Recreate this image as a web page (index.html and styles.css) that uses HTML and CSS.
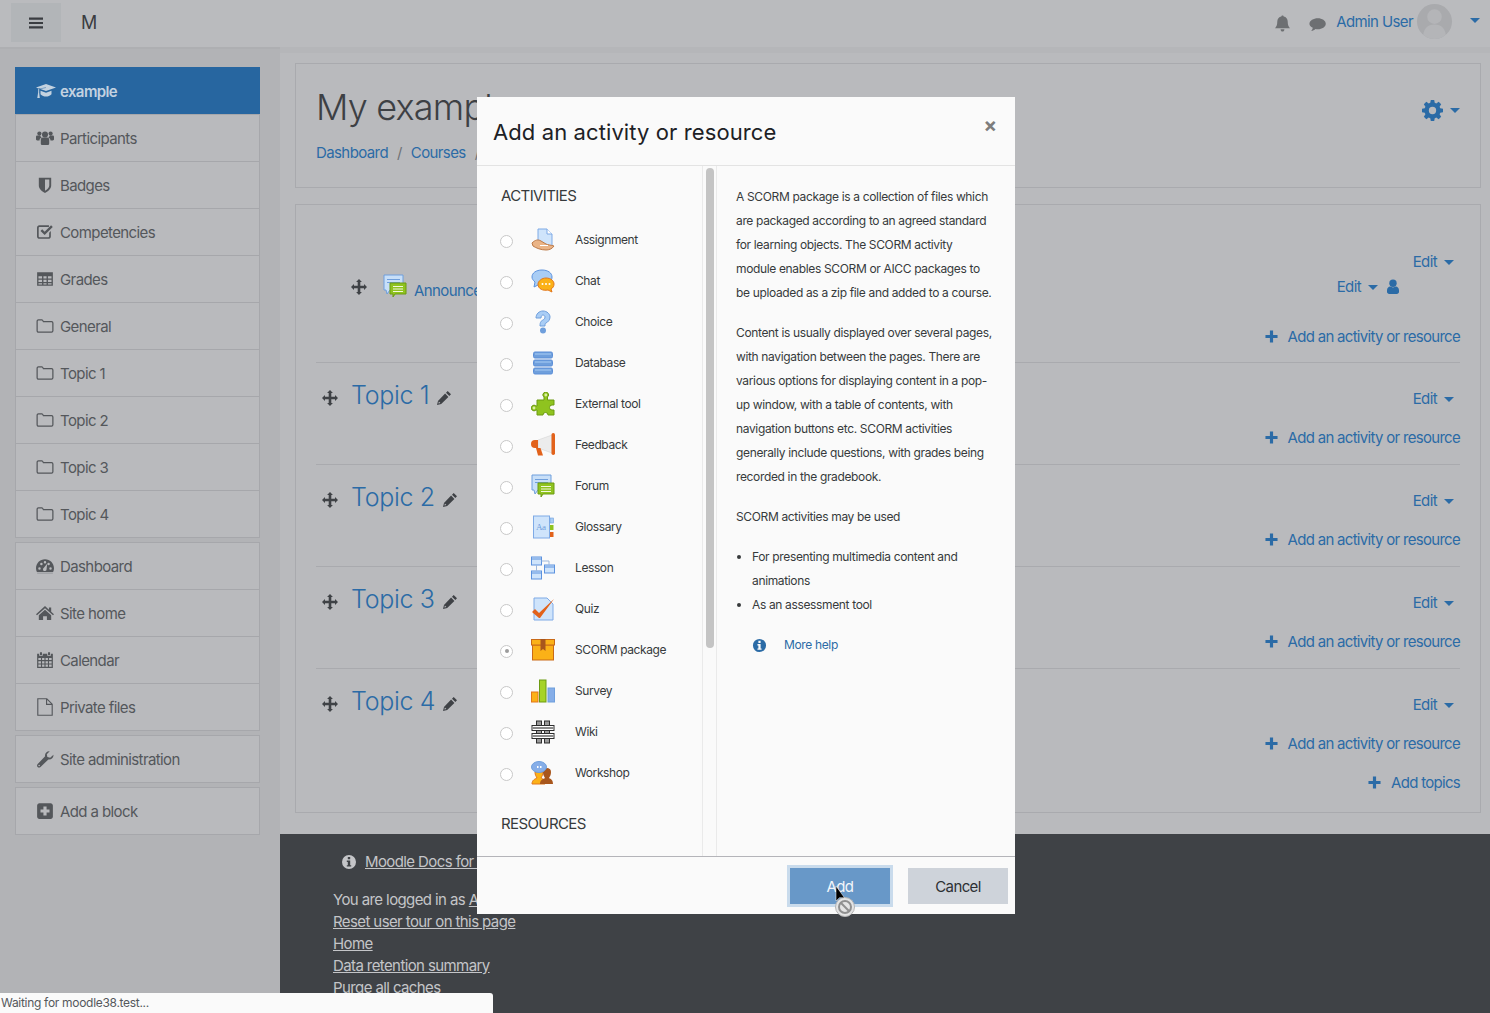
FILE: index.html
```html
<!DOCTYPE html>
<html lang="en">
<head>
    <meta charset="UTF-8">
    <title>My example</title>
    <link rel="stylesheet" href="styles.css">
</head>
<body>
    <svg class="sprite" xmlns="http://www.w3.org/2000/svg">
        <symbol id="i-bars" viewBox="0 0 16 16"><path d="M1 2.500h14v2.200H1zM1 6.900h14v2.200H1zM1 11.300h14v2.200H1z"/></symbol>
        <symbol id="i-cap" viewBox="0 0 20 16"><path d="M10 1 20 4.500l-10 3.600L3.600 5.800 10 5.100 9.800 4.500 2.400 5.500 0 4.500zM4.500 7.700l5.500 2 5.500-2v3.500c-1.500 1.600-3.500 2.300-5.500 2.300s-4-.7-5.500-2.300zM2.300 6l.9-.1v3.900l.6 5.200H1.300l.8-5.200z"/></symbol>
        <symbol id="i-users" viewBox="0 0 18 16"><circle cx="9" cy="4.600" r="3"/><circle cx="3.400" cy="3.600" r="2.100"/><circle cx="14.600" cy="3.600" r="2.100"/><path d="M4.800 9.600c0-1.300 1-2 2-2h4.400c1 0 2 .7 2 2v3.800c0 1-.8 1.600-1.600 1.600H6.400c-.8 0-1.600-.6-1.600-1.600zM0 7c0-.9.6-1.400 1.400-1.400h2.800c.3 1 .8 1.500 1.500 2-1.300.4-2 1.300-2.200 2.900H1.200C.5 10.500 0 10 0 9.300zM18 7c0-.9-.6-1.400-1.400-1.400h-2.800c-.3 1-.8 1.500-1.500 2 1.300.4 2 1.300 2.200 2.900h2.300c.7 0 1.200-.5 1.200-1.200z"/></symbol>
        <symbol id="i-shield" viewBox="0 0 16 16"><path d="M2.500 1.500h11v7c0 3-2.500 5-5.500 6.500-3-1.500-5.500-3.500-5.500-6.500zM8 3.200v9.900c1.900-1.100 3.800-2.600 3.800-4.600V3.200z"/></symbol>
        <symbol id="i-check" viewBox="0 0 16 16"><path d="M3 2h8.500v1.500H3.100c-.4 0-.7.300-.7.700v7.700c0 .4.300.700.700.700h7.900c.4 0 .7-.3.7-.7V8.700l1.500-1.500v4.700c0 1.200-1 2.200-2.200 2.200H3.100C1.900 14.100.9 13.100.9 11.900V4.200C.900 3 1.800 2 3 2z"/><path d="m4 7 1.500-1.400 2.200 2.200L13.400 2l1.500 1.500-7.200 7.200z"/></symbol>
        <symbol id="i-table" viewBox="0 0 16 16"><path d="M1 2h14v12H1zm1.200 3.500v2h3.200v-2zm4.400 0v2h2.800v-2zm4 0v2h3.200v-2zm-8.400 3.100v2h3.200v-2zm4.400 0v2h2.800v-2zm4 0v2h3.200v-2zm-8.400 3.100v1.200h3.200v-1.200zm4.400 0v1.200h2.800v-1.200zm4 0v1.200h3.200v-1.200z"/></symbol>
        <symbol id="i-folder" viewBox="0 0 16 16"><path fill="none" stroke="currentColor" stroke-width="1.100" d="M1 3.700c0-.7.500-1.200 1.200-1.200h3c.6 0 .9.500 1.100 1l.3.600h7.200c.7 0 1.200.5 1.200 1.200v7c0 .7-.5 1.200-1.200 1.200H2.200c-.7 0-1.200-.5-1.200-1.200z"/></symbol>
        <symbol id="i-dash" viewBox="0 0 16 16"><path d="M8 2c4.400 0 8 3.500 8 8 0 1.300-.3 2.400-.8 3.400H.8C.3 12.400 0 11.300 0 10c0-4.500 3.600-8 8-8zM3.100 9.100a1.100 1.100 0 1 0 0 2.200 1.100 1.100 0 0 0 0-2.200zm1.700-3.900a1.100 1.100 0 1 0 0 2.200 1.100 1.100 0 0 0 0-2.200zM8 3.600a1.100 1.100 0 1 0 0 2.200 1.100 1.100 0 0 0 0-2.200zm3.200 1.600a1.100 1.100 0 1 0 0 2.200 1.100 1.100 0 0 0 0-2.200zm1.700 3.900a1.100 1.100 0 1 0 0 2.200 1.100 1.100 0 0 0 0-2.200zM9.900 5.900 7 9.500a1.600 1.600 0 1 0 2.400 1.300z"/><path d="M1 14h14v.6H1z" opacity=".5"/></symbol>
        <symbol id="i-home" viewBox="0 0 16 16"><path d="M8 1.800 11.500 5V3h2v3.800L16 9l-.9 1L8 3.800.9 10 0 9zM8 5.200l5.500 4.700v4.300H9.700v-3.400H6.300v3.400H2.500V9.900z"/></symbol>
        <symbol id="i-calendar" viewBox="0 0 16 16"><path d="M3.500 1h1.800v2.500H3.500zM10.700 1h1.800v2.500h-1.800zM1 2.400h1.800v1.800h3.200V2.400h4v1.800h3.200V2.400H15V15H1zM2.100 6.200v1.900h2.300V6.200zm3.300 0v1.900h2.100V6.200zm3.100 0v1.900h2.100V6.200zm3.100 0v1.900h2.300V6.200zM2.100 9.100V11h2.300V9.100zm3.300 0V11h2.100V9.100zm3.100 0V11h2.100V9.100zm3.100 0V11h2.300V9.100zM2.100 12v2h2.300v-2zm3.300 0v2h2.100v-2zm3.100 0v2h2.100v-2zm3.100 0v2h2.300v-2z"/></symbol>
        <symbol id="i-file" viewBox="0 0 16 16"><path fill="none" stroke="currentColor" stroke-width="1" d="M1.600 .7h8l4.800 4.800v9.800H1.600zM9.400 .9v4.800h5"/></symbol>
        <symbol id="i-wrench" viewBox="0 0 16 16"><path d="M15.500 4.200c.3 2.400-1.800 4.700-4.500 4.300L4 15c-.8.700-1.900.7-2.600 0s-.6-1.800.1-2.500l6.600-6.900C7.500 3 9.800.8 12.200 1.100L9.600 3.700l.5 2.600 2.500.5zM2.800 13.100a.7.7 0 1 0 0 1.400.7.7 0 0 0 0-1.400z"/></symbol>
        <symbol id="i-plus-sq" viewBox="0 0 16 16"><path d="M3 1h10c1.100 0 2 .9 2 2v10c0 1.100-.9 2-2 2H3c-1.100 0-2-.9-2-2V3c0-1.100.9-2 2-2zm3.600 3v2.600H4v2.800h2.600V12h2.800V9.400H12V6.600H9.400V4z"/></symbol>
        <symbol id="i-move" viewBox="0 0 16 16"><path d="m8 0 2.900 3H9.300v3.700H13V5.100l3 2.900-3 2.900V9.300H9.300V13h1.600L8 16l-2.900-3h1.600V9.300H3v1.600L0 8l3-2.900v1.600h3.700V3H5.100z"/></symbol>
        <symbol id="i-pencil" viewBox="0 0 16 16"><path d="m11.700 1 3.300 3.300-1.700 1.700L10 2.700zM9.100 3.600l3.300 3.300-7.200 7.200-4.200 1 1-4.200zM2.900 11.600l-.5 2 2-.5z"/></symbol>
        <symbol id="i-bell" viewBox="0 0 16 16"><path d="M8 .5c.7 0 1.100.4 1.100 1 2.300.4 3.800 2.200 3.800 4.700 0 3.600 1 5 2.100 6.300H1c1.100-1.300 2.100-2.700 2.100-6.300 0-2.500 1.500-4.300 3.800-4.700 0-.6.400-1 1.100-1zM6.200 13.300h3.600c0 1.200-.8 2.200-1.800 2.200s-1.800-1-1.800-2.200z"/></symbol>
        <symbol id="i-comment" viewBox="0 0 16 16"><path d="M8.300 2c4 0 7.500 2.300 7.500 5.200s-3.500 5.200-7.500 5.200c-.8 0-1.500-.1-2.200-.2-1 .9-2.400 1.700-4 1.900.7-.8 1.300-1.800 1.500-3C1.600 10.100.4 8.700.4 7.200.4 4.300 4.300 2 8.300 2z"/></symbol>
        <symbol id="i-gear" viewBox="0 0 16 16"><path d="M6.700 0h2.600l.4 2.100 1.200.5 1.800-1.200 1.900 1.900-1.200 1.800.5 1.200 2.100.4v2.600l-2.100.4-.5 1.200 1.200 1.800-1.900 1.900-1.800-1.200-1.200.5-.4 2.100H6.700l-.4-2.100-1.200-.5-1.800 1.200-1.900-1.900 1.200-1.800-.5-1.200L0 9.300V6.700l2.100-.4.500-1.200-1.200-1.800 1.900-1.900 1.800 1.200 1.200-.5zM8 5.200a2.800 2.800 0 1 0 0 5.600 2.800 2.800 0 0 0 0-5.600z"/></symbol>
        <symbol id="i-user" viewBox="0 0 12 16"><circle cx="6" cy="4.200" r="3.700"/><path d="M0 11.500c0-2.400 1.400-3.700 3.200-3.900.8.500 1.800.8 2.800.8s2-.3 2.800-.8c1.800.2 3.200 1.500 3.200 3.900v1.300c0 1.300-1 2.200-2.200 2.200H2.200C1 15 0 14.100 0 12.800z"/></symbol>
        <symbol id="i-info" viewBox="0 0 16 16"><path d="M8 1a7 7 0 1 1 0 14A7 7 0 0 1 8 1zM6.800 3v2.300h2.400V3zM5.800 6.500v1.400h1v3.300h-1v1.400h4.400v-1.400h-1V6.500z"/></symbol>
        <symbol id="i-plus" viewBox="0 0 14 14"><path d="M5.300 .5h3.400v4.800h4.800v3.400H8.700v4.800H5.300V8.700H.5V5.300h4.800z"/></symbol>
        <symbol id="i-caret" viewBox="0 0 10 5"><path d="M0 0h10L5 5z"/></symbol>
        <symbol id="m-forum" viewBox="0 0 24 24"><path d="M1 1h19v15H7l-3 4-1-4H1z" fill="#c8dff8" stroke="#6f9fdc"/><path d="M4 5h13v1H4zM4 8h13v1H4z" fill="#6f9fdc"/><path d="M7 9h16v11H12l-2 3v-3H7z" fill="#8fc31f" stroke="#6d9b12"/><path d="M10 12h10v1H10zM10 14.500h10v1H10zM10 17h10v1H10z" fill="#f2f8dc"/></symbol>
    </svg>

    <header class="topbar">
        <button class="menu-btn"><svg class="icon"><use href="#i-bars"/></svg></button>
        <span class="brand">M</span>
        <div class="user-menu">
            <svg class="icon muted"><use href="#i-bell"/></svg>
            <svg class="icon muted"><use href="#i-comment"/></svg>
            <a class="user-name">Admin User</a>
            <span class="avatar">
                <svg viewBox="0 0 36 36"><circle cx="18" cy="13" r="7.500"/><path d="M6 36c0-11 5-15 12-15s12 4 12 15z"/></svg>
            </span>
            <svg class="caret"><use href="#i-caret"/></svg>
        </div>
    </header>

    <div class="layout">
        <aside class="sidebar">
            <nav class="nav-group">
                <a class="nav-item active"><svg class="icon"><use href="#i-cap"/></svg>example</a>
                <a class="nav-item"><svg class="icon"><use href="#i-users"/></svg>Participants</a>
                <a class="nav-item"><svg class="icon"><use href="#i-shield"/></svg>Badges</a>
                <a class="nav-item"><svg class="icon"><use href="#i-check"/></svg>Competencies</a>
                <a class="nav-item"><svg class="icon"><use href="#i-table"/></svg>Grades</a>
                <a class="nav-item"><svg class="icon"><use href="#i-folder"/></svg>General</a>
                <a class="nav-item"><svg class="icon"><use href="#i-folder"/></svg>Topic 1</a>
                <a class="nav-item"><svg class="icon"><use href="#i-folder"/></svg>Topic 2</a>
                <a class="nav-item"><svg class="icon"><use href="#i-folder"/></svg>Topic 3</a>
                <a class="nav-item"><svg class="icon"><use href="#i-folder"/></svg>Topic 4</a>
            </nav>
            <nav class="nav-group">
                <a class="nav-item"><svg class="icon"><use href="#i-dash"/></svg>Dashboard</a>
                <a class="nav-item"><svg class="icon"><use href="#i-home"/></svg>Site home</a>
                <a class="nav-item"><svg class="icon"><use href="#i-calendar"/></svg>Calendar</a>
                <a class="nav-item"><svg class="icon"><use href="#i-file"/></svg>Private files</a>
            </nav>
            <nav class="nav-group">
                <a class="nav-item"><svg class="icon"><use href="#i-wrench"/></svg>Site administration</a>
            </nav>
            <nav class="nav-group">
                <a class="nav-item"><svg class="icon"><use href="#i-plus-sq"/></svg>Add a block</a>
            </nav>
        </aside>

        <div class="content">
            <main class="main">
                <section class="card page-head">
                    <div>
                        <h1>My example</h1>
                        <ol class="crumbs">
                            <li><a>Dashboard</a></li>
                            <li><a>Courses</a></li>
                            <li><a>example</a></li>
                        </ol>
                    </div>
                    <div class="settings">
                        <svg class="gear"><use href="#i-gear"/></svg>
                        <svg class="caret"><use href="#i-caret"/></svg>
                    </div>
                </section>

                <section class="card course">
                    <div class="section first">
                        <div class="announce">
                            <svg class="icon move"><use href="#i-move"/></svg>
                            <svg class="forum-icon"><use href="#m-forum"/></svg>
                            <a>Announcements</a>
                        </div>
                        <div class="actions">
                            <a class="edit">Edit <svg class="caret"><use href="#i-caret"/></svg></a>
                            <div class="edit-row">
                                <a class="edit">Edit <svg class="caret"><use href="#i-caret"/></svg></a>
                                <svg class="user-icon"><use href="#i-user"/></svg>
                            </div>
                            <a class="add"><svg class="icon"><use href="#i-plus"/></svg>Add an activity or resource</a>
                        </div>
                    </div>
                    <div class="section">
                        <h3 class="topic"><svg class="icon move"><use href="#i-move"/></svg><a>Topic 1</a><svg class="icon pencil"><use href="#i-pencil"/></svg></h3>
                        <div class="actions">
                            <a class="edit">Edit <svg class="caret"><use href="#i-caret"/></svg></a>
                            <a class="add"><svg class="icon"><use href="#i-plus"/></svg>Add an activity or resource</a>
                        </div>
                    </div>
                    <div class="section">
                        <h3 class="topic"><svg class="icon move"><use href="#i-move"/></svg><a>Topic 2</a><svg class="icon pencil"><use href="#i-pencil"/></svg></h3>
                        <div class="actions">
                            <a class="edit">Edit <svg class="caret"><use href="#i-caret"/></svg></a>
                            <a class="add"><svg class="icon"><use href="#i-plus"/></svg>Add an activity or resource</a>
                        </div>
                    </div>
                    <div class="section">
                        <h3 class="topic"><svg class="icon move"><use href="#i-move"/></svg><a>Topic 3</a><svg class="icon pencil"><use href="#i-pencil"/></svg></h3>
                        <div class="actions">
                            <a class="edit">Edit <svg class="caret"><use href="#i-caret"/></svg></a>
                            <a class="add"><svg class="icon"><use href="#i-plus"/></svg>Add an activity or resource</a>
                        </div>
                    </div>
                    <div class="section">
                        <h3 class="topic"><svg class="icon move"><use href="#i-move"/></svg><a>Topic 4</a><svg class="icon pencil"><use href="#i-pencil"/></svg></h3>
                        <div class="actions">
                            <a class="edit">Edit <svg class="caret"><use href="#i-caret"/></svg></a>
                            <a class="add"><svg class="icon"><use href="#i-plus"/></svg>Add an activity or resource</a>
                        </div>
                    </div>
                    <div class="add-topics">
                        <a class="add"><svg class="icon"><use href="#i-plus"/></svg>Add topics</a>
                    </div>
                </section>
            </main>

            <footer class="footer">
                <p class="docs"><svg class="icon"><use href="#i-info"/></svg><a>Moodle Docs for this page</a></p>
                <p>You are logged in as <a>Admin User</a></p>
                <p><a>Reset user tour on this page</a></p>
                <p><a>Home</a></p>
                <p><a>Data retention summary</a></p>
                <p><a>Purge all caches</a></p>
            </footer>
        </div>
    </div>

    <!-- activity chooser -->
    <div class="modal">
        <div class="modal-head">
            <h2>Add an activity or resource</h2>
            <span class="close">×</span>
        </div>
        <div class="modal-body">
            <div class="options">
                <div class="options-title">ACTIVITIES</div>
                <label class="option"><span class="radio"></span>
                    <svg class="mod" viewBox="0 0 24 24"><path d="M7 1h9l5 5v14H7z" fill="#cfe4fb" stroke="#7eaae6"/><path d="M16 1v5h5" fill="#fff" stroke="#7eaae6"/><path d="M1 15c3-3 6-4 9-2l5 3c2 1 5 1 8 2-2 3-5 4-8 4-5 0-10-2-13-4z" fill="#eab487" stroke="#bd7a48"/><path d="M9 17h8v1H9z" fill="#fff"/></svg>
                    Assignment</label>
                <label class="option"><span class="radio"></span>
                    <svg class="mod" viewBox="0 0 24 24"><path d="M11 1c6 0 10 3 10 7 0 5-4 8-10 8-1 0-2 0-3-.5L3 18l1-5C2 11 1 10 1 8c0-4 4-7 10-7z" fill="#a9cdf5" stroke="#5c92de"/><path d="M15 9c5 0 8 3 8 6 0 2-1 4-3 5l1 3-4-2c-5 1-10-1-10-6 0-3 4-6 8-6z" fill="#fbb117" stroke="#e2761b"/><circle cx="11.500" cy="15" r="1" fill="#fff"/><circle cx="15" cy="15" r="1" fill="#fff"/><circle cx="18.500" cy="15" r="1" fill="#fff"/></svg>
                    Chat</label>
                <label class="option"><span class="radio"></span>
                    <svg class="mod" viewBox="0 0 24 24"><path d="M5 8c0-4 3-7 7-7s7 3 7 6-2 5-4 6c-1 .6-1 1-1 3h-5c0-4 1-5 3-6 1-.6 2-1.500 2-3 0-1-1-2-2-2s-2 1-2 3z" fill="#a9cdf5" stroke="#6f9fdc"/><circle cx="12" cy="20.500" r="3" fill="#6f9fdc"/></svg>
                    Choice</label>
                <label class="option"><span class="radio"></span>
                    <svg class="mod" viewBox="0 0 24 24"><rect x="2.500" y="1" width="19" height="6" rx="1.500" fill="#6f9fdc" stroke="#5c8fd8"/><rect x="2.500" y="9" width="19" height="6" rx="1.500" fill="#6f9fdc" stroke="#5c8fd8"/><rect x="2.500" y="17" width="19" height="6" rx="1.500" fill="#6f9fdc" stroke="#5c8fd8"/><path d="M4 3h16M4 11h16M4 19h16" stroke="#a9cdf5"/></svg>
                    Database</label>
                <label class="option"><span class="radio"></span>
                    <svg class="mod" viewBox="0 0 24 24"><path d="M6 8h7V5a2.800 2.800 0 1 1 3.500 0v3H23v5h-2a2.500 2.500 0 0 0 0 5h2v5h-6a2.500 2.500 0 0 0-5 0H6v-5H5a2.800 2.800 0 1 1 0-4h1z" fill="#8fc31f" stroke="#6d9b12"/><circle cx="14.800" cy="3" r="1.400" fill="#dcefa5"/><circle cx="3" cy="16" r="1.400" fill="#dcefa5"/></svg>
                    External tool</label>
                <label class="option"><span class="radio"></span>
                    <svg class="mod" viewBox="0 0 24 24"><path d="M7 7l14-5v18L7 15z" fill="#ececec" stroke="#cfcfcf" stroke-width=".5"/><path d="M7 7v8H4a4 4 0 0 1 0-8z" fill="#e2621b"/><path d="M5 15h4.500l2.500 7.500H7z" fill="#e2621b"/><rect x="20.500" y="0" width="3.500" height="22" rx="1.700" fill="#e2621b"/></svg>
                    Feedback</label>
                <label class="option"><span class="radio"></span>
                    <svg class="mod"><use href="#m-forum"/></svg>
                    Forum</label>
                <label class="option"><span class="radio"></span>
                    <svg class="mod" viewBox="0 0 24 24"><rect x="2.500" y="1" width="16" height="22" fill="#cfe4fb" stroke="#7eaae6"/><text class="mod-aa" x="5" y="15">Aa</text><rect x="19" y="3" width="3.500" height="5" fill="#a9cdf5" stroke="#6f9fdc" stroke-width=".6"/><rect x="19" y="10" width="3.500" height="5" fill="#8fc31f"/><rect x="19" y="17" width="3.500" height="5" fill="#e2621b"/></svg>
                    Glossary</label>
                <label class="option"><span class="radio"></span>
                    <svg class="mod" viewBox="0 0 24 24"><g fill="#cfe4fb" stroke="#5c92de"><rect x=".5" y="1" width="10" height="8"/><rect x="13.500" y="9" width="10" height="8"/><rect x=".5" y="15" width="10" height="8"/></g><path d="M1 3h9.500M14 11h9.500M1 17h9.500" stroke="#5c92de"/><path d="M5.500 9v6M10.500 5h7.500v4" fill="none" stroke="#9fb9dc"/></svg>
                    Lesson</label>
                <label class="option"><span class="radio"></span>
                    <svg class="mod" viewBox="0 0 24 24"><path d="M3 1h13l6 6v16H3z" fill="#cfe4fb" stroke="#7eaae6"/><path d="M1 15l3-3 4 4L23 2 9 21h-1z" fill="#e2621b"/></svg>
                    Quiz</label>
                <label class="option"><span class="radio checked"></span>
                    <svg class="mod" viewBox="0 0 24 24"><rect x="1.500" y="7" width="21" height="15" fill="#fbb117" stroke="#c96a18"/><rect x=".5" y="1.500" width="23" height="5.500" fill="#fbb117" stroke="#c96a18"/><path d="M9.500 1h5v12l-2.500-2-2.500 2z" fill="#a8561c"/></svg>
                    SCORM package</label>
                <label class="option"><span class="radio"></span>
                    <svg class="mod" viewBox="0 0 24 24"><rect x=".5" y="13" width="6.500" height="10" fill="#fbb117" stroke="#e2761b"/><rect x="8.500" y="1" width="6.500" height="22" fill="#a6d327" stroke="#6d9b12"/><rect x="17" y="9" width="6.500" height="14" fill="#86aee8" stroke="#6f9fdc"/></svg>
                    Survey</label>
                <label class="option"><span class="radio"></span>
                    <svg class="mod" viewBox="0 0 24 24"><g fill="#9a9a9a" stroke="#2e2e2e"><rect x="5.500" y="1" width="5" height="22"/><rect x="13.500" y="1" width="5" height="22"/></g><g fill="#fff" stroke="#2e2e2e"><rect x="1" y="5.500" width="22" height="5"/><rect x="1" y="13.500" width="22" height="5"/></g><path d="M1.500 8h21M1.500 16h21" stroke="#8a8a8a" stroke-width="2"/></svg>
                    Wiki</label>
                <label class="option"><span class="radio"></span>
                    <svg class="mod" viewBox="0 0 24 24"><path d="M1 23c0-4 3-5 5-6-1-2-2-3-2-6h8c0 3-1 4-2 6 2 1 4 2 4 6z" fill="#fbb117" stroke="#e2761b"/><path d="M9 23c0-4 3-5 5-6-1-2-2-3-2-6 0-3 2-4 4-4s4 1 4 4c0 3-1 4-2 6 2 1 4 2 4 6z" fill="#a8561c"/><ellipse cx="8" cy="6" rx="7.500" ry="5.500" fill="#86aee8" stroke="#6f9fdc"/><path d="M6 5h1.500v2H6zM9 5h1.500v2H9z" fill="#fff"/></svg>
                    Workshop</label>
                <div class="options-title resources">RESOURCES</div>
            </div>
            <div class="scrolltrack"><span class="thumb"></span></div>
            <div class="description">
                <p>A SCORM package is a collection of files which are packaged according to an agreed standard for learning objects. The SCORM activity module enables SCORM or AICC packages to be uploaded as a zip file and added to a course.</p>
                <p>Content is usually displayed over several pages, with navigation between the pages. There are various options for displaying content in a pop-up window, with a table of contents, with navigation buttons etc. SCORM activities generally include questions, with grades being recorded in the gradebook.</p>
                <p>SCORM activities may be used</p>
                <ul>
                    <li>For presenting multimedia content and animations</li>
                    <li>As an assessment tool</li>
                </ul>
                <a class="more-help"><svg class="icon"><use href="#i-info"/></svg>More help</a>
            </div>
        </div>
        <div class="modal-foot">
            <button class="btn btn-add">Add</button>
            <button class="btn btn-cancel">Cancel</button>
        </div>
    </div>

    <svg class="pointer" viewBox="0 0 28 36">
        <circle cx="14" cy="22" r="9.500" fill="#e4e4e4" stroke="#b5b5b5"/>
        <circle cx="14" cy="22" r="6" fill="none" stroke="#909090" stroke-width="2"/>
        <path d="m9.800 17.800 8.400 8.400" stroke="#909090" stroke-width="2"/>
        <path d="M5 1v15l3.500-3.300 5 .1z" fill="#000" stroke="#fff" stroke-width=".5"/>
    </svg>

    <div class="statusbar">Waiting for moodle38.test...</div>
</body>
</html>
```

FILE: styles.css
```css
* {
    box-sizing: border-box;
}

body {
    margin: 0;
    height: 100vh;
    overflow: hidden;
    display: flex;
    flex-direction: column;
    font-family: Inter, Roboto, sans-serif;
    font-size: 15px;
    letter-spacing: -0.6px;
    color: #4f5256;
    background: #b9babd;
}

a {
    color: #2b6ba6;
}

.sprite {
    display: none;
}

.icon {
    width: 16px;
    height: 16px;
    fill: currentColor;
    flex: none;
}

.caret {
    width: 10px;
    height: 5px;
    fill: currentColor;
    color: #2b6ba6;
}

/* Top bar */
.topbar {
    height: 47px;
    flex: none;
    display: flex;
    align-items: center;
    background: #babbbe;
    padding-left: 11px;
}

.menu-btn {
    width: 50px;
    height: 39px;
    margin-top: -2px;
    border: none;
    background: #b2b5b8;
    color: #3a3d41;
    display: flex;
    align-items: center;
    justify-content: center;
}

.brand {
    margin-left: 20px;
    margin-top: -2px;
    font-size: 18px;
    letter-spacing: 0;
    color: #3a3d41;
}

.user-menu {
    margin-left: auto;
    display: flex;
    align-items: center;
    color: #6d6f72;
}

.user-menu .icon {
    width: 17px;
    height: 17px;
    margin-top: -1px;
}

.user-name {
    margin-left: 10px;
    margin-top: -5px;
}

.user-menu .icon + .icon {
    margin-left: 18px;
    margin-top: 2px;
}

.avatar {
    width: 35px;
    height: 35px;
    margin-left: 4px;
    margin-top: -5px;
    border-radius: 50%;
    background: #a9aaad;
    overflow: hidden;
}

.avatar svg {
    display: block;
    fill: #b4b5b8;
}

.user-menu .caret {
    margin: -6px 10px 0 18px;
}

/* Layout */
.layout {
    flex: 1;
    display: flex;
    min-height: 0;
}

.sidebar {
    width: 280px;
    flex: none;
    padding: 18px 20px 0 15px;
    background: #b2b3b6;
    border-top: 2px solid #aeafb2;
}

.nav-group {
    border: 1px solid #a6a7ab;
    border-bottom: none;
    margin-bottom: 4px;
    background: #b9babd;
}

.nav-item {
    height: 47px;
    display: flex;
    align-items: center;
    gap: 6px;
    padding-left: 20px;
    border-bottom: 1px solid #a6a7ab;
    color: #54575b;
}

.nav-item .icon {
    width: 18px;
    height: 18px;
}

.active {
    margin: -1px -1px 0;
    padding: 1px 0 0 21px;
    height: 48px;
    gap: 4px;
    background: #2766a0;
    color: #c3d2e0;
    font-weight: 600;
}

.nav-item.active .icon {
    width: 20px;
    height: 20px;
    margin-top: -1px;
}

.content {
    flex: 1;
    min-width: 0;
    display: flex;
    flex-direction: column;
    border-top: 6px solid #b5b6b9;
}

.main {
    padding: 10px 9px 21px 15px;
}

.card {
    border: 1px solid #a9aaae;
    background: #b9babd;
}

/* Page heading */
.page-head {
    height: 125px;
    display: flex;
    justify-content: space-between;
    padding: 0 20px;
    margin-bottom: 16px;
}

h1 {
    margin: 20px 0 0;
    font-size: 36px;
    line-height: 46px;
    font-weight: 300;
    letter-spacing: -0.8px;
    color: #3d4044;
}

.crumbs {
    list-style: none;
    display: flex;
    margin: 11px 0 0;
    padding: 0;
    line-height: 24px;
}

.crumbs li + li::before {
    content: "/";
    padding: 0 9px;
    color: #6f7276;
}

.settings {
    display: flex;
    align-items: center;
    height: 22px;
    margin-top: 35px;
    gap: 7px;
}

.gear {
    width: 21px;
    height: 21px;
    fill: #2b6ba6;
}

/* Course sections */
.course {
    padding: 0 20px 18px;
}

.section {
    height: 102px;
    border-top: 1px solid #a9aaae;
    padding-top: 15px;
    display: flex;
    justify-content: space-between;
}

.section.first {
    height: 157px;
    border-top: none;
    padding-top: 45px;
}

.actions {
    padding-top: 9px;
    display: flex;
    flex-direction: column;
    align-items: flex-end;
}

.first .actions {
    padding-top: 0;
}

.edit {
    height: 24px;
    line-height: 24px;
    display: flex;
    align-items: center;
    gap: 7px;
    padding-right: 6px;
}

.edit-row {
    display: flex;
    align-items: center;
    gap: 9px;
    height: 24px;
    margin-top: 1px;
    padding-right: 61px;
}

.edit-row .edit {
    padding-right: 0;
}

.user-icon {
    width: 12px;
    height: 16px;
    fill: #2b6ba6;
}

.add {
    height: 24px;
    margin-top: 14px;
    display: flex;
    align-items: center;
    gap: 10px;
    letter-spacing: -0.7px;
}

.first .add {
    margin-top: 25px;
}

.add .icon {
    width: 13px;
    height: 13px;
}

.add-topics {
    display: flex;
    justify-content: flex-end;
}

.add-topics .add {
    margin-top: 0;
}

.announce {
    display: flex;
    align-items: center;
    height: 28px;
    margin-top: 23px;
    padding-left: 35px;
}

.forum-icon {
    width: 24px;
    height: 24px;
    margin-left: 16px;
    margin-top: -2px;
}

.announce a {
    margin-left: 7px;
    margin-top: 6px;
}

.move {
    color: #3f4246;
}

.topic {
    margin: 0;
    height: 34px;
    display: flex;
    align-items: center;
    padding-left: 6px;
    font-size: 25px;
    font-weight: 300;
    letter-spacing: -0.3px;
}

.topic a {
    margin-left: 13px;
}

.topic .move {
    margin-top: 6px;
}

.pencil {
    margin-left: 7px;
    margin-top: 6px;
    color: #3f4246;
}

/* Footer */
.footer {
    flex: 1;
    background: #3f4246;
    color: #c4c5c8;
    padding: 17px 0 0 53px;
    line-height: 22px;
}

.footer p {
    margin: 0;
}

.footer a {
    color: #c4c5c8;
    text-decoration: underline;
}

.docs {
    display: flex;
    align-items: center;
    gap: 8px;
    padding-left: 8px;
    margin-bottom: 16px !important;
}

/* Chooser modal */
.modal {
    position: absolute;
    left: 477px;
    top: 97px;
    width: 538px;
    height: 817px;
    display: flex;
    flex-direction: column;
    background: #fafafa;
    color: #373a3c;
}

.modal-head {
    height: 69px;
    flex: none;
    display: flex;
    justify-content: space-between;
    padding: 20px 18px 0 16px;
    border-bottom: 1px solid #e3e3e3;
}

h2 {
    margin: 0;
    font-size: 22px;
    line-height: 30px;
    font-weight: 400;
    letter-spacing: 0.1px;
    color: #1d2125;
}

.close {
    font-size: 20px;
    line-height: 16px;
    letter-spacing: 0;
    font-weight: 700;
    color: #7d7d7d;
}

.modal-body {
    flex: 1;
    min-height: 0;
    display: flex;
}

.options {
    width: 226px;
    flex: none;
    padding: 18px 0 0 24px;
    border-right: 1px solid #eaeaea;
    overflow: hidden;
}

.options-title {
    height: 24px;
    line-height: 24px;
    font-size: 15px;
    margin-bottom: 11px;
}

.resources {
    margin-top: 19px;
}

.option {
    height: 41px;
    display: flex;
    align-items: center;
    font-size: 12px;
    letter-spacing: -0.4px;
}

.radio {
    width: 13px;
    height: 13px;
    margin: 3px 0 0 -1px;
    border: 1px solid #c8c8c8;
    border-radius: 50%;
    flex: none;
    display: flex;
    align-items: center;
    justify-content: center;
    background: #fff;
}

.radio.checked::after {
    content: "";
    width: 4px;
    height: 4px;
    border-radius: 50%;
    background: #9c9c9c;
}

.mod {
    width: 24px;
    height: 24px;
    margin: 0 20px 0 18px;
    flex: none;
}

.mod-aa {
    font-family: "Liberation Serif", serif;
    font-size: 9px;
    fill: #6f9fdc;
}

.scrolltrack {
    width: 14px;
    flex: none;
    padding: 2px 3px;
    border-right: 1px solid #eaeaea;
}

.thumb {
    display: block;
    width: 8px;
    height: 480px;
    border-radius: 4px;
    background: #c4c4c4;
}

.description {
    flex: 1;
    padding: 19px 21px 0 19px;
    font-size: 12px;
    line-height: 24px;
    letter-spacing: -0.35px;
}

.description p {
    margin: 0 0 16px;
}

.description ul {
    margin: 0 0 16px;
    padding-left: 16px;
}

.more-help {
    display: flex;
    align-items: center;
    gap: 17px;
    padding-left: 16px;
}

.more-help .icon {
    width: 15px;
    height: 15px;
}

.modal-foot {
    height: 58px;
    flex: none;
    display: flex;
    gap: 18px;
    padding: 11px 7px 0 0;
    justify-content: flex-end;
    border-top: 1px solid #b4b4b9;
}

.btn {
    width: 100px;
    height: 36px;
    border: none;
    font: inherit;
    letter-spacing: inherit;
}

.btn-add {
    background: #6898c8;
    color: #f2f6fa;
    box-shadow: 0 0 0 3px #c9dbec;
}

.btn-cancel {
    background: #ced3da;
    color: #2d3034;
}

/* Mouse cursor caught by the screenshot */
.pointer {
    position: absolute;
    left: 831px;
    top: 885px;
    width: 28px;
    height: 36px;
}

.statusbar {
    position: absolute;
    left: 0;
    bottom: 0;
    width: 493px;
    height: 20px;
    padding-left: 1px;
    line-height: 20px;
    font-size: 12px;
    letter-spacing: -0.3px;
    background: #fafafa;
    border-top-right-radius: 3px;
    color: #55585c;
}
```
